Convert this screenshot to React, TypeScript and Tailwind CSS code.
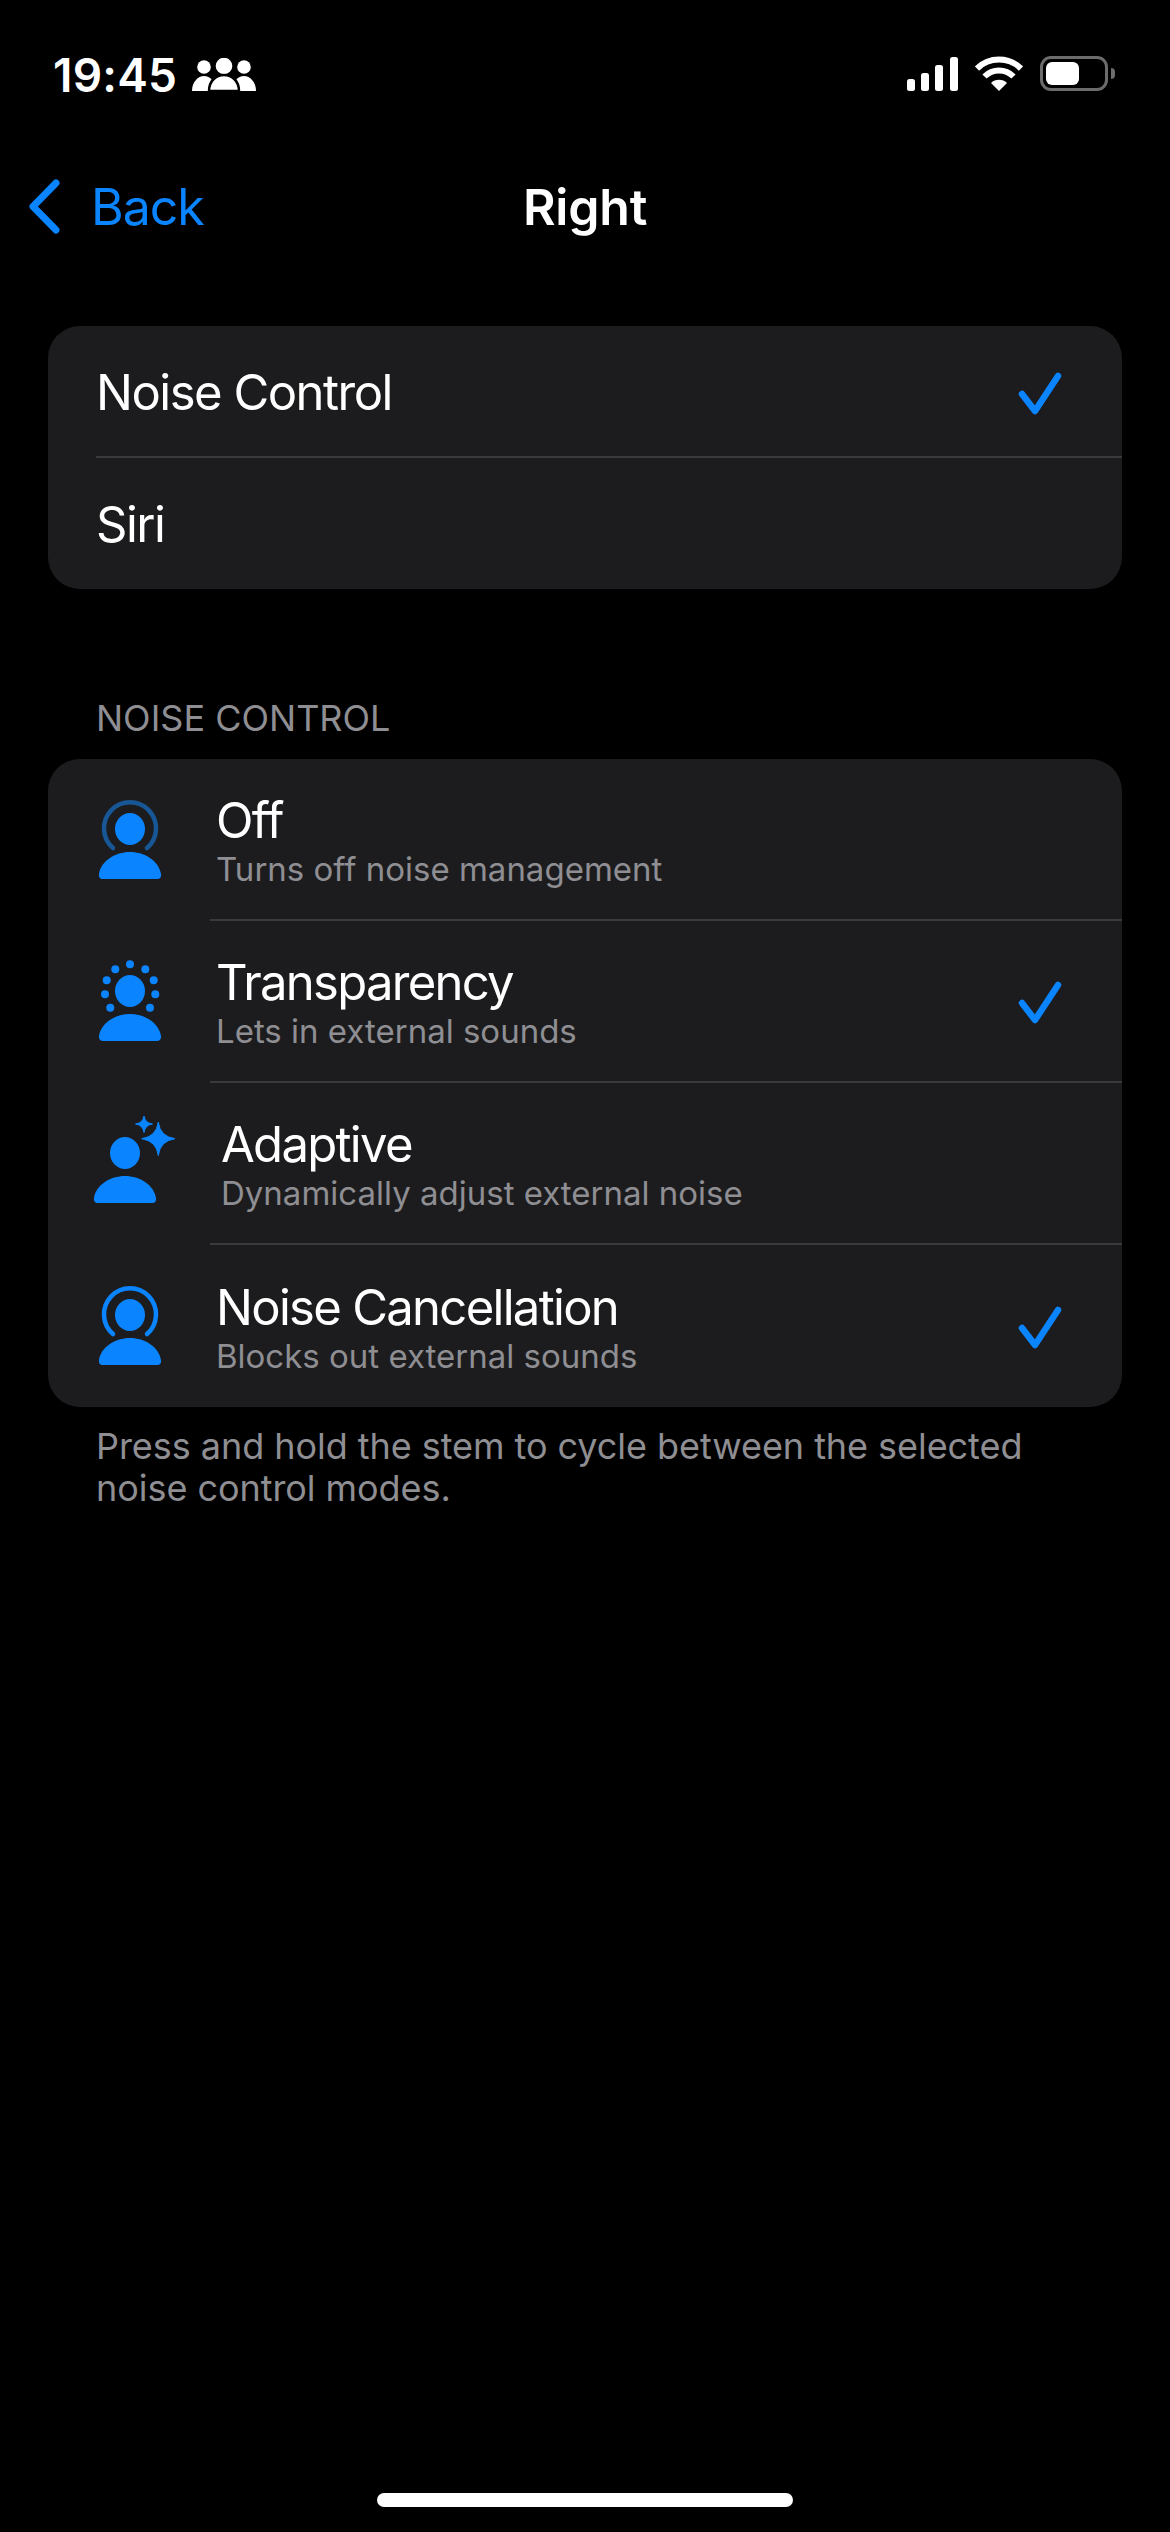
import * as React from 'react'

const font = "font-['Inter','Liberation_Sans',sans-serif]"

function Person() {
	return (
		<>
			<ellipse cx="40" cy="39" rx="15" ry="16" fill="#0a84ff"/>
			<path d="M13 89 C10 89 8.5 87 9 84 C11 71 25 62 40 62 C55 62 69 71 71 84 C71.5 87 70 89 67 89 Z" fill="#0a84ff"/>
		</>
	)
}

function RingIcon({dim}: {dim?: boolean}) {
	return (
		<svg width="80" height="100" viewBox="0 0 80 100">
			<Person/>
			<path d="M23 58 A26 26 0 1 1 57 58" fill="none" stroke={dim ? '#175796' : '#0a84ff'} strokeWidth="4.5" strokeLinecap="round"/>
		</svg>
	)
}

function DotsIcon() {
	const dots = [[40, 12.3], [25.3, 17.3], [55.3, 17.3], [16.7, 28.3], [63.7, 28.3], [15, 42.3], [65.3, 42.3], [20.3, 55.7], [60, 55.7]]
	return (
		<svg width="80" height="100" viewBox="0 0 80 100">
			<Person/>
			{dots.map(([x, y]) => <circle key={`${x}-${y}`} cx={x} cy={y} r="4" fill="#0a84ff"/>)}
		</svg>
	)
}

function SparkleIcon() {
	return (
		<svg width="90" height="100" viewBox="0 0 90 100" className="overflow-visible">
			<g transform="translate(-5 0)"><Person/></g>
			<path d="M68.3 8 Q70 22.5 85 24.7 Q70 27 68.3 41.5 Q66.5 27 51.7 24.7 Q66.5 22.5 68.3 8 Z" fill="#0a84ff" stroke="#0a84ff" strokeWidth="1" strokeLinejoin="round"/>
			<path d="M54 2 Q55 9 62.5 10 Q55 11 54 18.5 Q53 11 45.5 10 Q53 9 54 2 Z" fill="#0a84ff" stroke="#0a84ff" strokeWidth="1" strokeLinejoin="round"/>
		</svg>
	)
}

function Check() {
	return (
		<svg width="46" height="46" viewBox="0 0 46 46" className="shrink-0 mt-[3px]">
			<path d="M5 23 L18 40 L41 5" fill="none" stroke="#0a84ff" strokeWidth="6.5" strokeLinecap="round" strokeLinejoin="round"/>
		</svg>
	)
}

function GroupIcon() {
	return (
		<svg width="64" height="33" viewBox="0 0 64 33">
			<circle cx="12" cy="9" r="6.8" fill="#fff"/>
			<circle cx="52" cy="9" r="6.8" fill="#fff"/>
			<path d="M0 33 C0 24 6 18 12 18 C18 18 24 24 24 33 Z" fill="#fff"/>
			<path d="M40 33 C40 24 46 18 52 18 C58 18 64 24 64 33 Z" fill="#fff"/>
			<circle cx="32" cy="8" r="8.3" fill="#fff"/>
			<path d="M17 33 C17 23 24 17 32 17 C40 17 47 23 47 33 Z" fill="#fff" stroke="#000" strokeWidth="2.5"/>
		</svg>
	)
}

function Signal() {
	return (
		<svg width="51" height="34" viewBox="0 0 51 34">
			<rect x="0" y="22" width="8" height="12" rx="2.5" fill="#fff"/>
			<rect x="14" y="16" width="8" height="18" rx="2.5" fill="#fff"/>
			<rect x="28" y="8" width="8" height="26" rx="2.5" fill="#fff"/>
			<rect x="43" y="0" width="8" height="34" rx="2.5" fill="#fff"/>
		</svg>
	)
}

function Wifi() {
	return (
		<svg width="48" height="35" viewBox="0 0 48 35">
			<path d="M2 12.5 A31.5 31.5 0 0 1 46 12.5" fill="none" stroke="#fff" strokeWidth="6"/>
			<path d="M9.5 20.5 A20.5 20.5 0 0 1 38.5 20.5" fill="none" stroke="#fff" strokeWidth="6"/>
			<path d="M24 35 L16 27 A11.5 11.5 0 0 1 32 27 Z" fill="#fff"/>
		</svg>
	)
}

function Battery() {
	return (
		<div className="flex items-center gap-[3px]">
			<div className="w-[68px] h-[35px] rounded-[11px] border-[3px] border-[#6c6c6c] p-[3px]">
				<div className="w-[33px] h-full rounded-[6px] bg-white"></div>
			</div>
			<div className="w-[4px] h-[11px] rounded-r-full bg-[#6c6c6c]"></div>
		</div>
	)
}

const modes = [
	{title: 'Off', sub: 'Turns off noise management', icon: <RingIcon dim/>, checked: false, indent: 'pl-[6px]'},
	{title: 'Transparency', sub: 'Lets in external sounds', icon: <DotsIcon/>, checked: true, indent: 'pl-[6px]'},
	{title: 'Adaptive', sub: 'Dynamically adjust external noise', icon: <SparkleIcon/>, checked: false, indent: 'pl-[11px]'},
	{title: 'Noise Cancellation', sub: 'Blocks out external sounds', icon: <RingIcon/>, checked: true, indent: 'pl-[6px]'},
]

export default function App() {
	return (
		<div className={`${font} w-[1170px] h-[2532px] bg-black text-white flex flex-col overflow-hidden`}>
			<div className="h-[56px] shrink-0"></div>
			<div className="h-[35px] shrink-0 flex flex-row items-end justify-between pl-[53px] pr-[55px]">
				<div className="flex flex-row items-end gap-[15px]">
					<p className="text-[46px] leading-[32px] font-semibold tracking-[0.2px]">19:45</p>
					<GroupIcon/>
				</div>
				<div className="flex flex-row items-end gap-[17px]">
					<Signal/>
					<Wifi/>
					<Battery/>
				</div>
			</div>

			<div className="relative h-[88px] mt-[72px] shrink-0 flex flex-row items-center justify-center">
				<div className="absolute left-[25px] top-[12px] flex flex-row items-center text-[#0a84ff]">
					<svg width="40" height="64" viewBox="0 0 40 64">
						<path d="M31 8 L8 31.5 L31 55" fill="none" stroke="#0a84ff" strokeWidth="7" strokeLinecap="round" strokeLinejoin="round"/>
					</svg>
					<span className="ml-[26px] text-[50px] leading-[64px] tracking-[-1px]">Back</span>
				</div>
				<p className="text-[50px] leading-[64px] font-semibold tracking-[-0.2px]">Right</p>
			</div>

			<div className="mx-[48px] mt-[75px] rounded-[32px] bg-[#1c1c1e] text-[49px] tracking-[-1.5px]">
				<div className="pl-[48px] h-[132px]">
					<div className="h-full flex flex-row items-center justify-between pr-[59px] border-b-2 border-[#3a3a3c] pt-[3px]">
						<p>Noise Control</p>
						<Check/>
					</div>
				</div>
				<div className="pl-[48px] h-[131px] pt-[3px] flex flex-row items-center">
					<p>Siri</p>
				</div>
			</div>

			<p className="mt-[107px] ml-[96px] text-[36px] leading-[44px] text-[#8e8e93]">NOISE CONTROL</p>
			<div className="mx-[48px] mt-[19px] rounded-[32px] bg-[#1c1c1e]">
				{modes.map((mode, i) => (
					<div key={mode.title} className="flex flex-row h-[162px]">
						<div className="w-[162px] pl-[42px] shrink-0 flex flex-row items-center">{mode.icon}</div>
						<div className={`flex-1 flex flex-row items-center justify-between pr-[59px] ${mode.indent} ${i < modes.length - 1 ? 'border-b-2 border-[#3a3a3c]' : ''}`}>
							<div className="flex flex-col pt-[10px]">
								<p className="text-[49px] leading-[50px] tracking-[-1.7px]">{mode.title}</p>
								<p className="text-[33px] leading-[46px] text-[#8e8e93]">{mode.sub}</p>
							</div>
							{mode.checked && <Check/>}
						</div>
					</div>
				))}
			</div>
			<p className="mt-[18px] ml-[96px] w-[1000px] text-[36px] leading-[42px] tracking-[-0.05px] text-[#8e8e93]">Press and hold the stem to cycle between the selected noise control modes.</p>

			<div className="mt-auto mb-[25px] ml-[377px] w-[416px] h-[14px] rounded-full bg-white"></div>
		</div>
	)
}
